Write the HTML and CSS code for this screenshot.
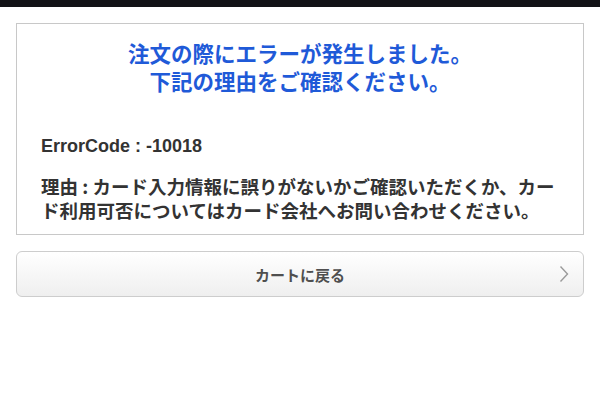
FILE: index.html
```html
<!DOCTYPE html>
<html lang="ja">
<head>
<meta charset="UTF-8" />
<title>注文エラー</title>
<link rel="stylesheet" href="styles.css">
</head>
<body>
<div class="status-bar"></div>

<main class="page">
  <section class="error-box">
    <h1 class="error-title">注文の際にエラーが発生しました。<br>下記の理由をご確認ください。</h1>
    <p class="error-code">ErrorCode : -10018</p>
    <p class="error-reason">理由 : カード入力情報に誤りがないかご確認いただくか、カード利用可否についてはカード会社へお問い合わせください。</p>
  </section>

  <a class="back-btn" href="#">
    <span class="back-label">カートに戻る</span>
    <svg class="chevron" width="10" height="18" viewBox="0 0 10 18">
      <polyline points="1.5,1.5 8.5,9 1.5,16.5" fill="none" stroke="#9a9a9a" stroke-width="1.4" />
    </svg>
  </a>
</main>
</body>
</html>
```

FILE: styles.css
```css
body {
  margin: 0;
  background: #fff;
  font-family: "Noto Sans CJK JP", sans-serif;
  color: #333;
}
.status-bar {
  height: 7px;
  background: #131316;
}
.page {
  padding: 16px 16px 0 16px;
}
.error-box {
  border: 1px solid #c8c8c8;
  padding: 15px 24px 12px 24px;
}
.error-title {
  margin: 0 0 39px 0;
  text-align: center;
  font-size: 21.5px;
  line-height: 28px;
  font-weight: 700;
  color: #1f5ad8;
}
.error-code {
  margin: 0 0 16px 0;
  font-family: "Liberation Sans", "Noto Sans CJK JP", sans-serif;
  font-size: 18px;
  line-height: 24px;
  font-weight: 700;
  color: #333;
}
.error-reason {
  margin: 0;
  font-size: 18.5px;
  line-height: 24px;
  font-weight: 700;
  color: #333;
}
.back-btn {
  margin-top: 16px;
  height: 44px;
  display: flex;
  align-items: center;
  justify-content: center;
  position: relative;
  border: 1px solid #cdcdcd;
  border-radius: 6px;
  background: linear-gradient(#ffffff, #efefef);
  text-decoration: none;
}
.back-label {
  font-size: 15px;
  font-weight: 700;
  color: #4f4f4f;
}
.chevron {
  position: absolute;
  right: 14px;
  top: 13px;
}
```
